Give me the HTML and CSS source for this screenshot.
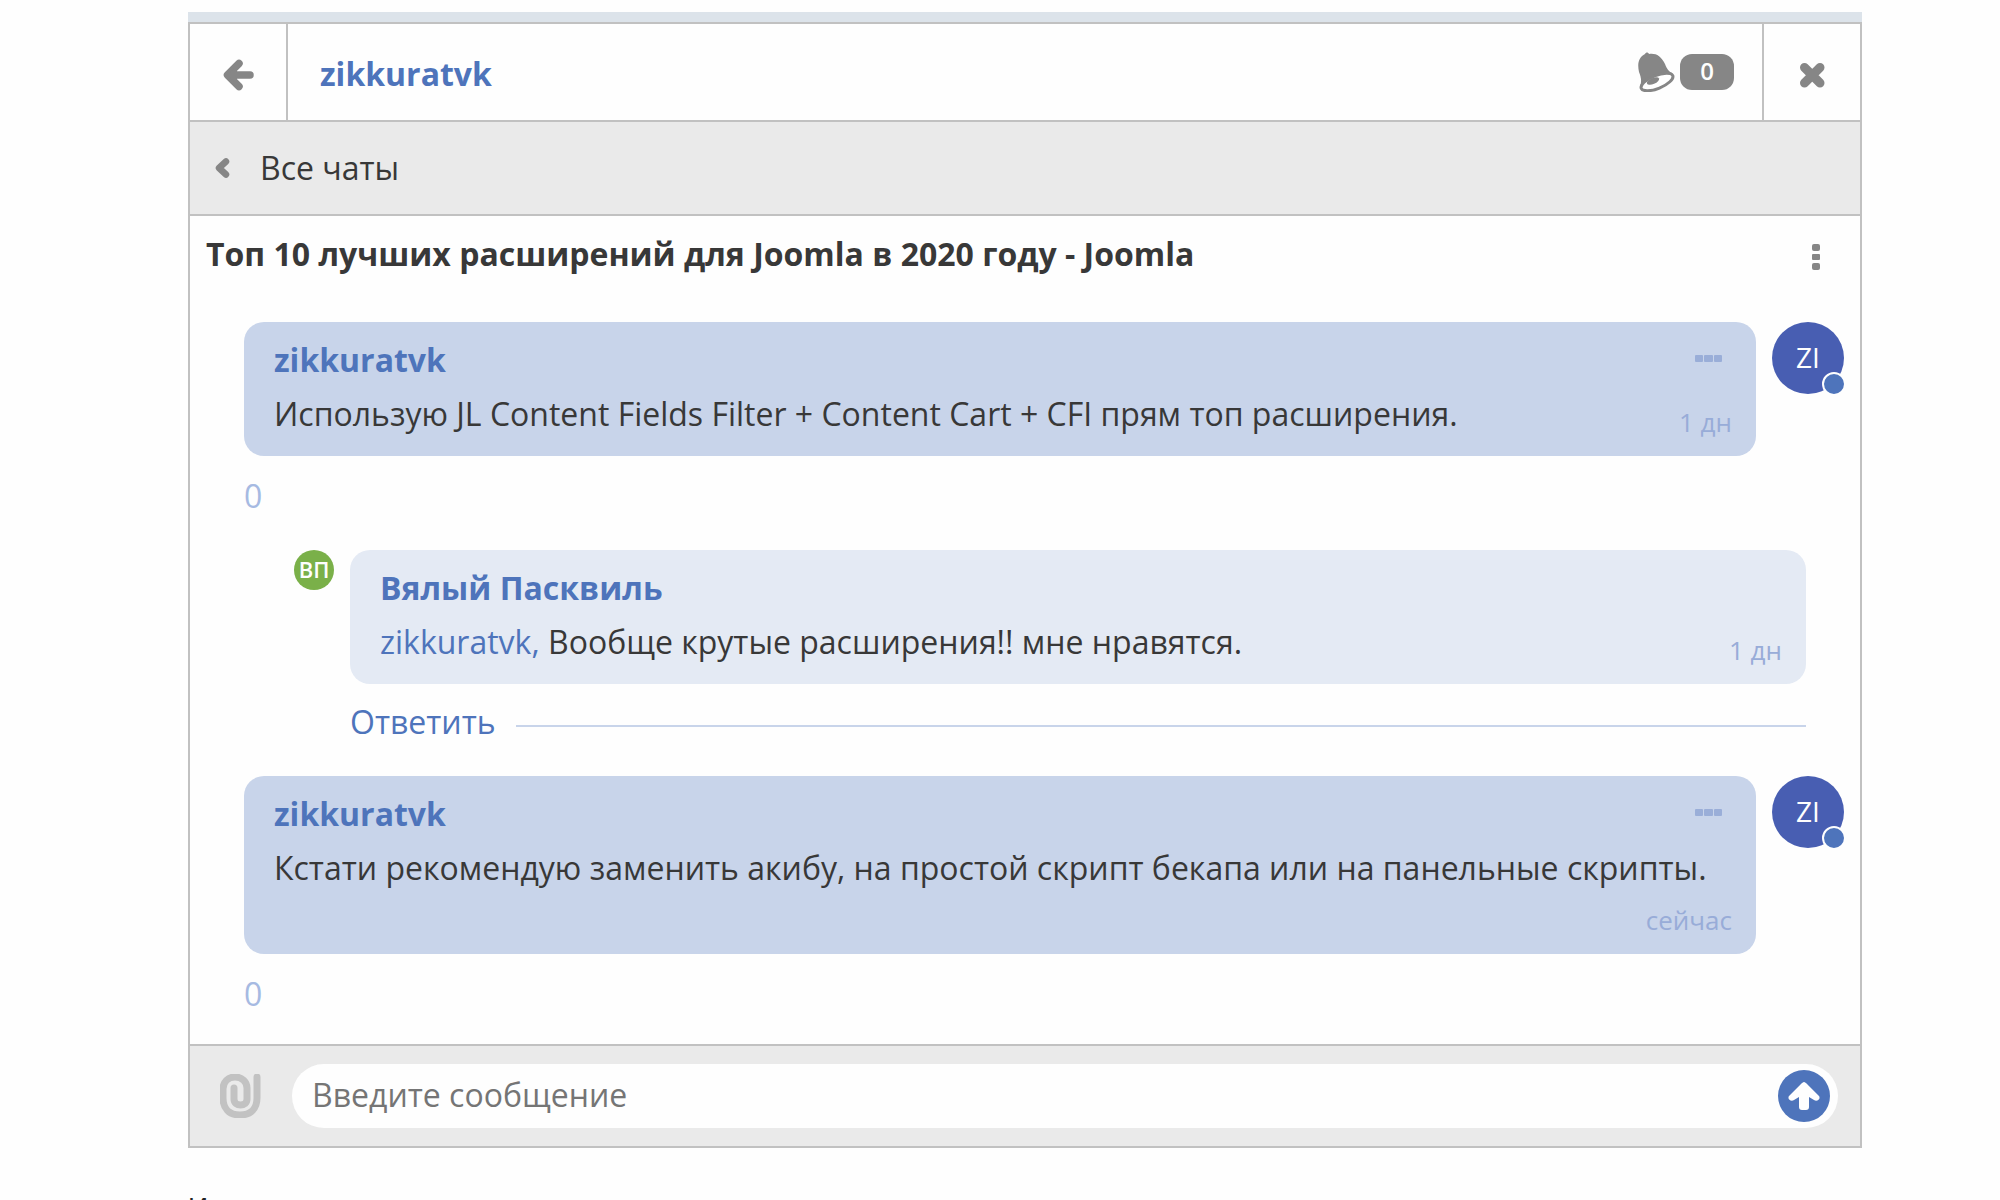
FILE: index.html
```html
<!DOCTYPE html>
<html lang="ru">
<head>
<meta charset="utf-8">
<title>Чат</title>
<link rel="stylesheet" href="styles.css">
</head>
<body>
<main class="widget">
  <section class="panel">
    <header class="topbar">
      <button class="topbar-button topbar-back" type="button" aria-label="Назад">
        <svg width="32" height="32" viewBox="0 0 32 32"><path d="M28 16H7M17 4.500 5.500 16 17 27.500" fill="none" stroke="currentColor" stroke-width="7.500" stroke-linecap="round" stroke-linejoin="round"/><path d="M15 7 5 16 15 25V16Z" fill="currentColor"/></svg>
      </button>
      <a class="topbar-user" href="#">zikkuratvk</a>
      <button class="alerts" type="button" aria-label="Уведомления">
        <svg width="38" height="40" viewBox="0 0 38 40"><path d="M7 2C8 0 10 0 11 2C18 1 23 4 27 12C29 18 32 20 35 22L3 36L2 34C4 30 3 25 1 20C-1 11 1 5 7 2Z" fill="currentColor"/><ellipse cx="19" cy="30" rx="17" ry="6.500" transform="rotate(-22 19 30)" fill="#fff" stroke="currentColor" stroke-width="3"/><ellipse cx="15" cy="29" rx="6.500" ry="3" transform="rotate(-22 15 29)" fill="currentColor"/></svg>
        <span class="alerts-count">0</span>
      </button>
      <button class="topbar-button topbar-close" type="button" aria-label="Закрыть">
        <svg width="28" height="28" viewBox="0 0 28 28"><path d="M6.500 6.500 22 22M22 6.500 6.500 22" fill="none" stroke="currentColor" stroke-width="9" stroke-linecap="round"/></svg>
      </button>
    </header>

    <a class="all-chats" href="#">
      <svg width="16" height="20" viewBox="0 0 16 20"><path d="M12 3.500 5 10 12 16.500" fill="none" stroke="currentColor" stroke-width="6.500" stroke-linecap="round" stroke-linejoin="round"/></svg>
      <span>Все чаты</span>
    </a>

    <div class="thread">
      <div class="thread-head">
        <h1 class="thread-title">Топ 10 лучших расширений для Joomla в 2020 году - Joomla</h1>
        <button class="thread-menu" type="button" aria-label="Меню">
          <svg width="10" height="28" viewBox="0 0 10 28"><g fill="currentColor"><rect x="1" y="0" width="8" height="7" rx="2"/><rect x="1" y="10" width="8" height="6" rx="1"/><rect x="1" y="19" width="8" height="7" rx="2"/></g></svg>
        </button>
      </div>

      <article class="message">
        <div class="bubble bubble-own">
          <a class="author" href="#">zikkuratvk</a>
          <p class="text">Использую JL Content Fields Filter + Content Cart + CFI прям топ расширения.</p>
          <button class="bubble-menu" type="button" aria-label="Действия"><svg width="30" height="10" viewBox="0 0 30 10"><g fill="currentColor"><rect x="1" y="1" width="8" height="7" rx="1"/><rect x="10" y="1" width="9" height="7" rx="1"/><rect x="20" y="1" width="8" height="7" rx="1"/></g></svg></button>
          <time class="time">1 дн</time>
        </div>
        <div class="avatar">ZI<span class="status"></span></div>
      </article>
      <div class="votes">0</div>

      <article class="message message-reply">
        <div class="avatar avatar-small">ВП</div>
        <div class="bubble">
          <a class="author" href="#">Вялый Пасквиль</a>
          <p class="text"><a class="mention" href="#">zikkuratvk,</a> Вообще крутые расширения!! мне нравятся.</p>
          <time class="time">1 дн</time>
        </div>
      </article>
      <div class="reply-row">
        <button class="reply" type="button">Ответить</button>
      </div>

      <article class="message">
        <div class="bubble bubble-own bubble-tall">
          <a class="author" href="#">zikkuratvk</a>
          <p class="text">Кстати рекомендую заменить акибу, на простой скрипт бекапа или на панельные скрипты.</p>
          <button class="bubble-menu" type="button" aria-label="Действия"><svg width="30" height="10" viewBox="0 0 30 10"><g fill="currentColor"><rect x="1" y="1" width="8" height="7" rx="1"/><rect x="10" y="1" width="9" height="7" rx="1"/><rect x="20" y="1" width="8" height="7" rx="1"/></g></svg></button>
          <time class="time">сейчас</time>
        </div>
        <div class="avatar">ZI<span class="status"></span></div>
      </article>
      <div class="votes">0</div>
    </div>

    <form class="composer">
      <button class="attach" type="button" aria-label="Прикрепить файл">
        <svg width="42" height="44" viewBox="0 0 42 44"><path d="M37 3V24C37 34 31 41 20 41S3 34 3 24V15C3 8 8 3 15 3S27 8 27 14V25C27 29 24 31 20.500 31S14 29 14 25V14" fill="none" stroke="currentColor" stroke-width="7" stroke-linecap="round"/></svg>
      </button>
      <div class="field">
        <input class="field-input" type="text" placeholder="Введите сообщение" aria-label="Введите сообщение">
        <button class="send" type="submit" aria-label="Отправить">
          <svg width="32" height="30" viewBox="0 0 32 30"><path d="M16 1C17 1 18 2 19 3L31 15C33 18 29 21 26 19L21 16V26Q21 29 18 29H14Q11 29 11 26V16L6 19C3 21-1 18 1 15L13 3C14 2 15 1 16 1Z" fill="currentColor"/></svg>
        </button>
      </div>
    </form>
  </section>
  <p class="after">И</p>
</main>
</body>
</html>
```
FILE: styles.css
```css
* {
  box-sizing: border-box;
}

html {
  overflow: hidden;
}

body {
  margin: 0;
  background: #fefefe;
  color: #383838;
  font: 32px/40px "Open Sans", "Noto Sans", sans-serif;
}

button {
  padding: 0;
  border: 0;
  background: none;
  color: inherit;
  font: inherit;
  cursor: pointer;
}

a {
  color: #4e74bb;
  text-decoration: none;
}

svg {
  display: block;
}

.widget {
  margin: 12px 138px 0 188px;
}

.widget::before {
  content: "";
  display: block;
  height: 10px;
  background: #dce3ea;
}

.panel {
  border: 2px solid #c1c1c1;
  background: #fefefe;
}

.topbar {
  display: flex;
  align-items: stretch;
  height: 98px;
  border-bottom: 2px solid #c1c1c1;
  color: #868686;
}

.topbar-button {
  display: flex;
  align-items: center;
  justify-content: center;
  width: 98px;
  padding-top: 6px;
}

.topbar-back {
  border-right: 2px solid #c1c1c1;
}

.topbar-close {
  border-left: 2px solid #c1c1c1;
}

.topbar-user {
  flex: 1;
  padding: 30px 32px;
  font-weight: 700;
}

.alerts {
  display: flex;
  align-items: flex-start;
  gap: 4px;
  padding: 28px 28px 0 0;
}

.alerts-count {
  width: 54px;
  margin-top: 2px;
  border-radius: 12px;
  background: #868686;
  color: #fefefe;
  font-size: 24px;
  font-weight: 600;
  line-height: 34px;
  padding-bottom: 2px;
  text-align: center;
}

.all-chats {
  display: flex;
  align-items: center;
  gap: 30px;
  height: 94px;
  padding-left: 24px;
  border-bottom: 2px solid #c1c1c1;
  background: #eaeaea;
  color: #383838;
}

.all-chats svg {
  color: #868686;
}

.thread {
  padding: 18px 16px 0;
}

.thread-head {
  display: flex;
  justify-content: space-between;
  margin-bottom: 48px;
}

.thread-title {
  margin: 0;
  font-size: 32px;
  font-weight: 700;
  line-height: 40px;
}

.thread-menu {
  padding: 8px 23px 0 0;
  color: #868686;
}

.message {
  display: flex;
  align-items: flex-start;
  gap: 16px;
  padding-left: 38px;
}

.bubble {
  position: relative;
  flex: 1;
  min-height: 134px;
  padding: 18px 30px 22px;
  border-radius: 20px;
  background: #e4eaf4;
}

.bubble-own {
  background: #c8d4ea;
}

.bubble-tall {
  padding-bottom: 66px;
}

.author {
  display: block;
  font-weight: 700;
}

.text {
  margin: 14px 0 0;
}

.time {
  position: absolute;
  right: 24px;
  bottom: 18px;
  color: #98acd8;
  font-size: 26px;
  line-height: 32px;
}

.bubble-menu {
  position: absolute;
  top: 32px;
  right: 32px;
  color: #9aaed8;
}

.avatar {
  position: relative;
  width: 72px;
  height: 72px;
  border-radius: 50%;
  background: #485eb2;
  color: #fefefe;
  font-size: 28px;
  line-height: 70px;
  text-align: center;
}

.avatar-small {
  width: 40px;
  height: 40px;
  background: #7ab049;
  font-size: 22px;
  font-weight: 600;
  line-height: 38px;
}

.status {
  position: absolute;
  right: -2px;
  bottom: -2px;
  width: 24px;
  height: 24px;
  border: 2px solid #fefefe;
  border-radius: 50%;
  background: #4e74bb;
}

.votes {
  padding: 20px 38px 30px;
  color: #a6bae2;
}

.message-reply {
  margin-top: 4px;
  padding: 0 38px 0 88px;
}

.reply-row {
  display: flex;
  align-items: center;
  gap: 20px;
  padding: 18px 38px 34px 144px;
}

.reply-row::after {
  content: "";
  flex: 1;
  height: 2px;
  margin-top: 8px;
  background: #c8d4ea;
}

.reply {
  color: #4e74bb;
}

.composer {
  display: flex;
  align-items: center;
  gap: 30px;
  padding: 18px 22px 18px 30px;
  border-top: 2px solid #c1c1c1;
  background: #eaeaea;
}

.attach {
  color: #c2c2c2;
}

.field {
  display: flex;
  flex: 1;
  align-items: center;
  height: 64px;
  padding: 0 8px 0 20px;
  border-radius: 32px;
  background: #fefefe;
}

.field-input {
  flex: 1;
  min-width: 0;
  padding: 0 0 2px;
  border: 0;
  outline: 0;
  background: none;
  color: #383838;
  font: inherit;
}

.field-input::placeholder {
  color: #757575;
  opacity: 1;
}

.send {
  display: flex;
  align-items: center;
  justify-content: center;
  width: 52px;
  height: 52px;
  border-radius: 50%;
  background: #4e74bb;
  color: #fefefe;
}

.after {
  margin: 40px 0 0;
  color: #222;
  font: 28px/40px "Liberation Sans", Arial, sans-serif;
}
```
